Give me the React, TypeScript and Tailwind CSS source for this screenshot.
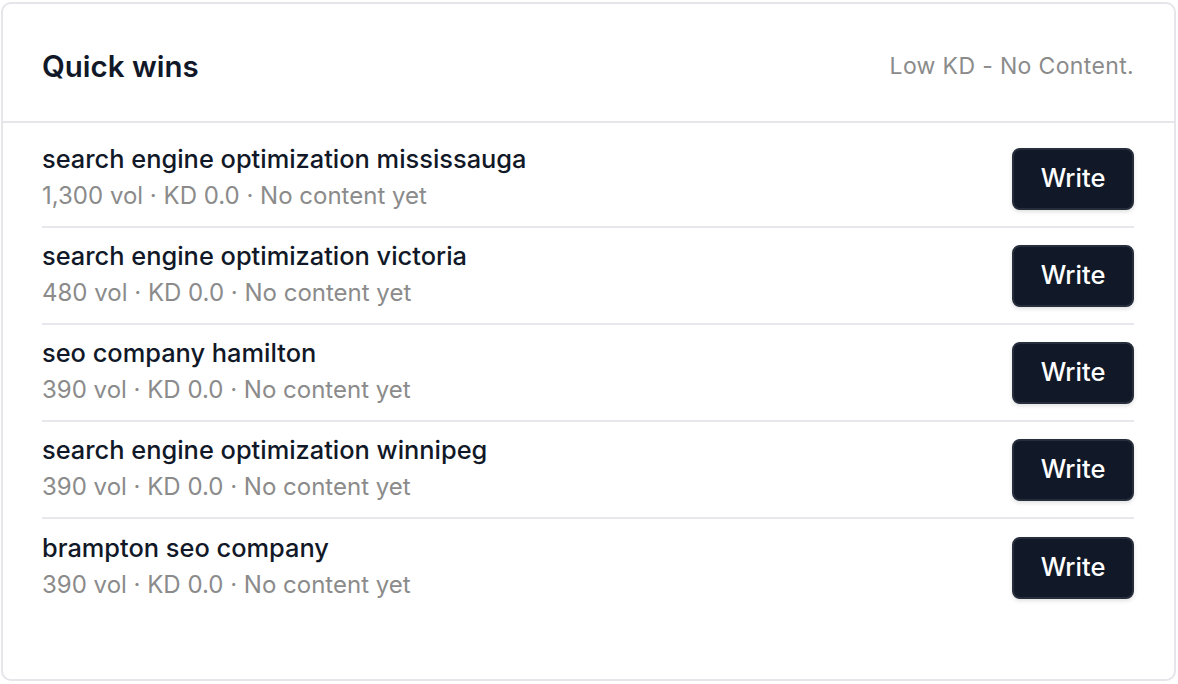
const rows = [
  { keyword: "search engine optimization mississauga", vol: "1,300" },
  { keyword: "search engine optimization victoria", vol: "480" },
  { keyword: "seo company hamilton", vol: "390" },
  { keyword: "search engine optimization winnipeg", vol: "390" },
  { keyword: "brampton seo company", vol: "390" },
];

export default function App() {
  return (
    <div className="h-[684px] w-[1178px] bg-white pl-px pr-[2px] pt-[2px] pb-[3px] font-['Inter',sans-serif]">
      <div className="flex h-full flex-col rounded-[10px] border-2 border-[#e5e5ea] bg-white">
        <div className="flex h-[119px] items-center justify-between border-b-2 border-[#e5e5ea] pl-[39px] pr-[40px] pt-[8px]">
          <h2 className="text-[29.5px] font-semibold text-[#111827]">Quick wins</h2>
          <span className="text-[23px] tracking-[0.35px] text-[#8b8b8b]">Low KD - No Content.</span>
        </div>
        <ul className="pl-[39px] pr-[40px] pt-[8px]">
          {rows.map((r, i) => (
            <li
              key={r.keyword}
              className={`flex h-[97px] items-center justify-between ${
                i < rows.length - 1 ? "border-b-2 border-[#e8e8ec]" : ""
              }`}
            >
              <div className="flex flex-col pb-[4px]">
                <span className="text-[25.4px] leading-[37px] font-medium text-[#111827]">{r.keyword}</span>
                <span className="text-[24px] leading-[37px] text-[#8b8b8b]">
                  {r.vol} vol · KD 0.0 · No content yet
                </span>
              </div>
              <button
                type="button"
                className="flex h-[62px] w-[122px] items-center justify-center rounded-[8px] border-2 border-[#262d3b] bg-[#111827] text-[25.5px] font-medium text-white shadow-[0_2px_4px_rgba(0,0,0,0.12)]"
              >
                Write
              </button>
            </li>
          ))}
        </ul>
      </div>
    </div>
  );
}
